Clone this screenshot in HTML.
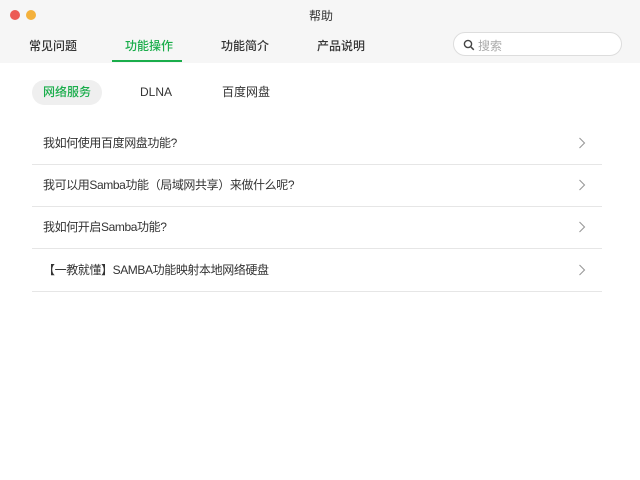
<!DOCTYPE html>
<html><head><meta charset="utf-8"><style>
body{margin:0;width:640px;height:480px;background:#fff;font-family:"Liberation Sans","Noto Sans CJK SC",sans-serif;position:relative;overflow:hidden}
.hdr{position:absolute;left:0;top:0;width:640px;height:63px;background:#f6f6f6}
.dot{position:absolute;top:10px;width:10px;height:10px;border-radius:50%}
.t{position:absolute;font-size:12px;color:#333}
.tab{position:absolute;top:37px;font-size:12px;color:#333;font-weight:500}
.ul{position:absolute;left:112px;top:60px;width:70px;height:2px;background:#1aad4b}
.search{position:absolute;left:453px;top:32px;width:169px;height:24px;border:1px solid #ddd;border-radius:13px;background:#fff;box-sizing:border-box}
.pill{position:absolute;top:80px;height:25px;line-height:25px;font-size:12px;color:#333}
.row{position:absolute;left:32px;width:570px;height:42px;border-bottom:1px solid #e6e6e6;box-sizing:border-box}
.row span{position:absolute;left:11px;top:11px;font-size:12px;letter-spacing:-0.4px;color:#333}
.row svg{position:absolute;left:546px;top:14px}
</style></head><body>
<div class="hdr"></div>
<div class="dot" style="left:10px;background:#ec5b55"></div>
<div class="dot" style="left:26px;background:#f4b13c"></div>
<div class="t" style="left:309px;top:7px">帮助</div>
<div class="tab" style="left:29px">常见问题</div>
<div class="tab" style="left:125px;color:#1aad4b">功能操作</div>
<div class="tab" style="left:221px">功能简介</div>
<div class="tab" style="left:317px">产品说明</div>
<div class="ul"></div>
<div class="search"><svg width="12" height="12" style="position:absolute;left:9px;top:6px" viewBox="0 0 12 12"><circle cx="5" cy="5" r="3.6" fill="none" stroke="#444" stroke-width="1.4"/><path d="M7.6 7.6L10.8 10.8" stroke="#444" stroke-width="1.5"/></svg><span style="position:absolute;left:24px;top:4px;font-size:12px;color:#aaa">搜索</span></div>
<div class="pill" style="left:32px;width:70px;background:#efefef;border-radius:13px;text-align:center;color:#1aad4b;font-weight:500">网络服务</div>
<div class="pill" style="left:140px">DLNA</div>
<div class="pill" style="left:222px">百度网盘</div>
<div class="row" style="top:123px"><span>我如何使用百度网盘功能?</span><svg width="8" height="12"><path d="M1.5 1l5 5-5 5" fill="none" stroke="#999" stroke-width="1.1"/></svg></div>
<div class="row" style="top:165px"><span>我可以用Samba功能（局域网共享）来做什么呢?</span><svg width="8" height="12"><path d="M1.5 1l5 5-5 5" fill="none" stroke="#999" stroke-width="1.1"/></svg></div>
<div class="row" style="top:207px"><span>我如何开启Samba功能?</span><svg width="8" height="12"><path d="M1.5 1l5 5-5 5" fill="none" stroke="#999" stroke-width="1.1"/></svg></div>
<div class="row" style="top:250px"><span>【一教就懂】SAMBA功能映射本地网络硬盘</span><svg width="8" height="12"><path d="M1.5 1l5 5-5 5" fill="none" stroke="#999" stroke-width="1.1"/></svg></div>
</body></html>
